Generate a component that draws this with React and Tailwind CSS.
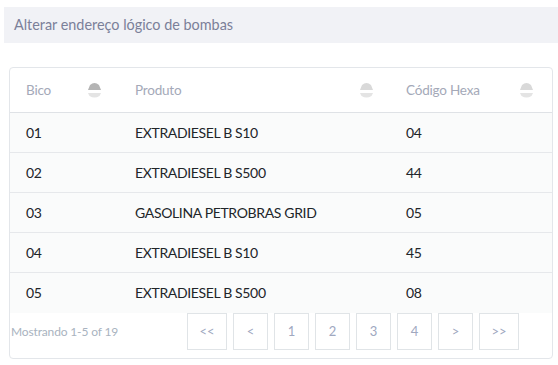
import React from "react";

const rows = [
  { bico: "01", produto: "EXTRADIESEL B S10", hexa: "04" },
  { bico: "02", produto: "EXTRADIESEL B S500", hexa: "44" },
  { bico: "03", produto: "GASOLINA PETROBRAS GRID", hexa: "05" },
  { bico: "04", produto: "EXTRADIESEL B S10", hexa: "45" },
  { bico: "05", produto: "EXTRADIESEL B S500", hexa: "08" },
];

const SortIcon = ({ active }) => (
  <svg width="13" height="16" viewBox="0 0 13 16">
    <path d="M0 8 L13 8 L11 3 Q6.5 -1 2 3 Z" fill={active ? "#b4b4b4" : "#d9d9d9"} />
    <path d="M0 11 L13 11 L11.5 14 Q6.5 17 1.5 14 Z" fill="#e4e4e4" />
  </svg>
);

const pages = [
  { label: "<<", w: "w-[40px]" },
  { label: "<", w: "w-[35px]" },
  { label: "1", w: "w-[35px]" },
  { label: "2", w: "w-[35px]" },
  { label: "3", w: "w-[35px]" },
  { label: "4", w: "w-[35px]" },
  { label: ">", w: "w-[35px]" },
  { label: ">>", w: "w-[40px]" },
];

const App = () => {
  return (
    <div className="w-[558px] h-[365px] bg-white font-['Lato',sans-serif] overflow-hidden">
      {/* Title bar */}
      <div className="pt-[7px] pl-[4px]">
        <div className="h-[36px] bg-[#f1f2f6] flex items-center pl-[10px] text-[14.4px] text-[#7b8099]">
          Alterar endereço lógico de bombas
        </div>
      </div>

      {/* Table card */}
      <div className="mt-[24px] ml-[9px] w-[544px] border border-[#e3e6ea] rounded-[4px]">
        <div className="grid grid-cols-[109px_271px_1fr] h-[45px] border-b border-[#dfe2e6] text-[13.5px] tracking-[-0.2px] text-[#a4a9b8]">
          <div className="flex items-center justify-between pl-[16px] pr-[18px]">
            <span>Bico</span>
            <SortIcon active />
          </div>
          <div className="flex items-center justify-between pl-[16px] pr-[17px]">
            <span>Produto</span>
            <SortIcon />
          </div>
          <div className="flex items-center justify-between pl-[16px] pr-[19px]">
            <span>Código Hexa</span>
            <SortIcon />
          </div>
        </div>

        {rows.map((r, i) => (
          <div
            key={i}
            className={`grid grid-cols-[109px_271px_1fr] h-[40px] pb-[1px] bg-[#fafbfb] text-[14px] tracking-[-0.35px] text-[#212529] ${
              i < rows.length - 1 ? "border-b border-[#e6e8eb]" : ""
            }`}
          >
            <div className="flex items-center pl-[16px]">{r.bico}</div>
            <div className="flex items-center pl-[16px]">{r.produto}</div>
            <div className="flex items-center pl-[16px]">{r.hexa}</div>
          </div>
        ))}

        {/* Footer */}
        <div className="flex items-center pb-[8px]">
          <span className="text-[12px] tracking-[-0.15px] text-[#a9b3c0] pl-[1px]">Mostrando 1-5 of 19</span>
          <div className="flex gap-[6px] ml-auto mr-[33px]">
            {pages.map((p) => (
              <div
                key={p.label}
                className={`${p.w} h-[37px] border border-[#e0e4e7] flex items-center justify-center text-[13px] text-[#a0a8bf]`}
              >
                {p.label}
              </div>
            ))}
          </div>
        </div>
      </div>
    </div>
  );
};

export default App;
